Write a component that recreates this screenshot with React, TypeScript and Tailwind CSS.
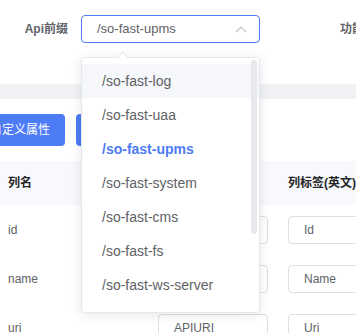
import React from "react";

const options = [
  "/so-fast-log",
  "/so-fast-uaa",
  "/so-fast-upms",
  "/so-fast-system",
  "/so-fast-cms",
  "/so-fast-fs",
  "/so-fast-ws-server",
  "/so-fast-tool-codegen",
];

const rows = [
  { name: "id", title: "", label: "Id" },
  { name: "name", title: "", label: "Name" },
  { name: "uri", title: "APIURI", label: "Uri" },
];

function CellInput({ value }: { value: string }) {
  return (
    <div className="h-[28px] w-full border border-[#dcdfe6] rounded-[4px] px-[15px] flex items-center text-[12px] text-[#606266] bg-white whitespace-nowrap overflow-hidden">
      {value}
    </div>
  );
}

export default function App() {
  const selected = "/so-fast-upms";

  return (
    <div
      className="relative w-[356px] h-[333px] overflow-hidden bg-white"
      style={{ fontFamily: '"Liberation Sans", "Noto Sans CJK SC", sans-serif' }}
    >
      {/* form row */}
      <div className="h-[84px] pt-[15px] flex items-start whitespace-nowrap">
        <div className="w-[81px] shrink-0 pr-[13px] text-right leading-[28px] text-[12px] font-bold text-[#606266]">
          Api前缀
        </div>
        <div className="w-[179px] h-[28px] border border-[#4e7bf6] rounded-[4px] flex items-center pl-[15px] pr-[10px] shrink-0">
          <span className="flex-1 text-[13px] text-[#606266]">{selected}</span>
          <svg width="12" height="8" viewBox="0 0 12 8" className="mr-[2px]">
            <polyline points="1,7 6,2 11,7" fill="none" stroke="#c0c4cc" strokeWidth="1.2" />
          </svg>
        </div>
        <div className="ml-[80px] shrink-0 leading-[28px] text-[12px] font-bold text-[#606266]">功能名称</div>
      </div>

      <div className="h-[15px] bg-[#f0f2f5]" />

      {/* buttons */}
      <div className="pt-[15px] flex gap-[11px] ml-[-25px] whitespace-nowrap">
        <div className="shrink-0 h-[32px] px-[15px] rounded-[4px] bg-[#4e7bf6] text-white text-[12px] flex items-center">
          自定义属性
        </div>
        <div className="shrink-0 h-[32px] px-[15px] rounded-[4px] bg-[#4e7bf6] text-white text-[12px] flex items-center">
          批量设置属性
        </div>
      </div>

      {/* table */}
      <div className="mt-[15px] whitespace-nowrap">
        <div className="h-[44px] bg-[#f7f9fc] flex items-center text-[12px] font-bold text-[#262626]">
          <div className="w-[148px] px-[8px] shrink-0">列名</div>
          <div className="w-[130px] px-[10px] shrink-0">列标题</div>
          <div className="w-[140px] px-[10px] shrink-0">列标签(英文)</div>
        </div>
        {rows.map((r) => (
          <div key={r.name} className="h-[49px] flex items-center text-[12px] text-[#606266]">
            <div className="w-[148px] px-[8px] shrink-0">{r.name}</div>
            <div className="w-[130px] px-[10px] shrink-0">
              <CellInput value={r.title} />
            </div>
            <div className="w-[140px] px-[10px] shrink-0">
              <CellInput value={r.label} />
            </div>
          </div>
        ))}
      </div>

      {/* select dropdown */}
      <div className="absolute left-[81px] top-[57px] w-[179px] h-[256px] bg-white border border-[#e4e7ed] rounded-[4px] shadow-[0_2px_12px_rgba(0,0,0,0.1)]">
        <div className="absolute left-[37px] top-[-5px] w-[8px] h-[8px] rotate-45 bg-white border-l border-t border-[#e4e7ed]" />
        <div className="relative h-full overflow-hidden rounded-[4px] pt-[6px]">
          {options.map((o, i) => (
            <div
              key={o}
              className={
                "h-[34px] leading-[34px] pl-[20px] text-[14px] whitespace-nowrap " +
                (i === 0 ? "bg-[#f5f7fa] " : "") +
                (o === selected ? "text-[#4e7bf6] font-bold" : "text-[#606266]")
              }
            >
              {o}
            </div>
          ))}
          <div className="absolute right-[2px] top-[2px] w-[6px] h-[174px] rounded-full bg-[#e7e9ec]" />
        </div>
      </div>
    </div>
  );
}
